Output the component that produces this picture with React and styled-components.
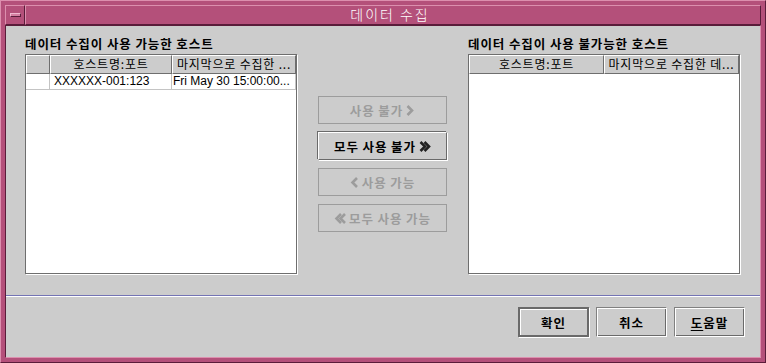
import React from 'react';
import styled, { createGlobalStyle } from 'styled-components';

const GlobalStyle = createGlobalStyle`
  html, body {
    margin: 0;
    padding: 0;
    background: #cccccc;
  }
  * {
    box-sizing: border-box;
  }
`;

const KO = `"Noto Sans CJK KR", "Noto Sans", sans-serif`;

const Frame = styled.div`
  width: 766px;
  height: 363px;
  background: #b4507a;
  border: 1px solid;
  border-color: #dc8fae #5a1c3a #5a1c3a #dc8fae;
  padding: 4px;
  display: flex;
  flex-direction: column;
`;

const TitleBar = styled.div`
  display: flex;
  height: 20px;
`;

const MenuButton = styled.div`
  width: 20px;
  height: 20px;
  border: 1px solid;
  border-color: #dc8fae #5a1c3a #5a1c3a #dc8fae;
  display: flex;
  align-items: center;
  justify-content: center;
`;

const MenuBar = styled.div`
  width: 11px;
  height: 4px;
  background: #d47fa2;
  border: 1px solid;
  border-color: #f0b8cf #5a1c3a #5a1c3a #f0b8cf;
`;

const Title = styled.div`
  flex: 1;
  height: 20px;
  border: 1px solid;
  border-color: #dc8fae #5a1c3a #5a1c3a #dc8fae;
  color: #ffffff;
  font-family: ${KO};
  font-size: 14px;
  font-weight: 300;
  letter-spacing: 2px;
  line-height: 17px;
  text-align: center;
  padding-right: 6px;
`;

const Body = styled.div`
  flex: 1;
  background: #cccccc;
  border: 1px solid;
  border-color: #5a1c3a #dc8fae #dc8fae #5a1c3a;
  display: flex;
  flex-direction: column;
`;

const Content = styled.div`
  display: grid;
  grid-template-columns: 272px 129px 272px;
  column-gap: 21px;
  padding: 10px 0 0 19px;
`;

const Column = styled.div`
  display: flex;
  flex-direction: column;
`;

const Label = styled.div`
  font-family: ${KO};
  font-size: 12.5px;
  font-weight: 700;
  letter-spacing: 0.9px;
  color: #000;
  height: 15px;
  line-height: 15px;
  margin-bottom: 3px;
  white-space: nowrap;
`;

const Table = styled.div`
  width: 272px;
  height: 220px;
  background: #ffffff;
  border: 1px solid #6e6e6e;
  box-shadow: 1px 1px 0 #ffffff;
  display: flex;
  flex-direction: column;
`;

const HeaderRow = styled.div`
  display: grid;
  grid-template-columns: ${p => p.$cols};
  height: 19px;
`;

const HeaderCell = styled.div`
  background: #cccccc;
  border: 1px solid;
  border-color: #ffffff #6e6e6e #6e6e6e #ffffff;
  font-family: ${KO};
  font-size: 12px;
  letter-spacing: 0.8px;
  line-height: 16px;
  color: #000;
  text-align: center;
  white-space: nowrap;
  overflow: hidden;
`;

const DataRow = styled.div`
  display: grid;
  grid-template-columns: ${p => p.$cols};
  height: 16px;
`;

const DataCell = styled.div`
  border-right: 1px solid #c4c4c4;
  border-bottom: 1px solid #c4c4c4;
  font-family: "Liberation Sans", Arial, sans-serif;
  font-size: 12px;
  line-height: 15px;
  color: #000;
  padding-left: ${p => p.$pad || 1}px;
  white-space: nowrap;
  overflow: hidden;
`;

const Middle = styled.div`
  display: flex;
  flex-direction: column;
  gap: 8px;
  padding-top: 60px;
`;

const MoveButton = styled.button`
  width: 129px;
  height: 28px;
  padding: 0;
  background: #cccccc;
  font-family: ${KO};
  font-size: 12.5px;
  font-weight: 700;
  letter-spacing: 0.9px;
  display: flex;
  align-items: center;
  justify-content: center;
  gap: 3px;
  color: ${p => (p.disabled ? '#9c9c9c' : '#000')};
  border: 1px solid;
  border-color: ${p => (p.disabled ? '#9c9c9c' : '#ffffff #6a6a6a #6a6a6a #ffffff')};
  box-shadow: ${p => (p.disabled ? 'none' : '1px 1px 0 #ffffff, -1px -1px 0 #6a6a6a')};
`;

const Separator = styled.div`
  margin-top: 21px;
  height: 2px;
  border-top: 1px solid #7474b4;
  border-bottom: 1px solid #ffffff;
`;

const ButtonRow = styled.div`
  display: flex;
  justify-content: flex-end;
  gap: 7px;
  padding: 10px 15px 0 0;
`;

const DialogButton = styled.button`
  width: 71px;
  height: 30px;
  padding: 0;
  background: #cccccc;
  font-family: ${KO};
  font-size: 12.5px;
  font-weight: 700;
  letter-spacing: 1px;
  color: #000;
  border: ${p => (p.$default ? '2px solid #6a6a6a' : '1px solid')};
  border-color: ${p => (p.$default ? '#6a6a6a' : '#808080 #ffffff #ffffff #808080')};
  box-shadow: ${p =>
    p.$default
      ? '1px 1px 0 #ffffff, inset 1px 1px 0 #ffffff'
      : 'inset 1px 1px 0 #ffffff, inset -1px -1px 0 #6a6a6a'};
`;

const Mnemonic = styled.span`
  text-decoration: underline;
  text-underline-offset: 2px;
`;

const Chevron = ({ dir = 'right', double = false, color }) => {
  const pts = dir === 'right' ? '1.5,1 6,5.5 1.5,10' : '7,1 2.5,5.5 7,10';
  return (
    <svg width={double ? 12 : 9} height="11" viewBox={`0 0 ${double ? 12 : 9} 11`}>
      <polyline points={pts} fill="none" stroke={color} strokeWidth="2.6" />
      {double && (
        <polyline
          points={pts}
          transform="translate(4 0)"
          fill="none"
          stroke={color}
          strokeWidth="2.6"
        />
      )}
    </svg>
  );
};

const leftCols = '24px 122px 1fr';
const rightCols = '135px 1fr';

export default function App() {
  return (
    <>
      <GlobalStyle />
      <Frame>
        <TitleBar>
          <MenuButton>
            <MenuBar />
          </MenuButton>
          <Title>데이터 수집</Title>
        </TitleBar>
        <Body>
          <Content>
            <Column>
              <Label>데이터 수집이 사용 가능한 호스트</Label>
              <Table>
                <HeaderRow $cols={leftCols}>
                  <HeaderCell />
                  <HeaderCell>호스트명:포트</HeaderCell>
                  <HeaderCell>마지막으로 수집한 ...</HeaderCell>
                </HeaderRow>
                <DataRow $cols={leftCols}>
                  <DataCell />
                  <DataCell $pad={4}>XXXXXX-001:123</DataCell>
                  <DataCell>Fri May 30 15:00:00...</DataCell>
                </DataRow>
              </Table>
            </Column>
            <Middle>
              <MoveButton disabled>
                사용 불가 <Chevron color="#9c9c9c" />
              </MoveButton>
              <MoveButton>
                모두 사용 불가 <Chevron double color="#222" />
              </MoveButton>
              <MoveButton disabled>
                <Chevron dir="left" color="#9c9c9c" /> 사용 가능
              </MoveButton>
              <MoveButton disabled>
                <Chevron dir="left" double color="#9c9c9c" />모두 사용 가능
              </MoveButton>
            </Middle>
            <Column>
              <Label>데이터 수집이 사용 불가능한 호스트</Label>
              <Table>
                <HeaderRow $cols={rightCols}>
                  <HeaderCell>호스트명:포트</HeaderCell>
                  <HeaderCell>마지막으로 수집한 데...</HeaderCell>
                </HeaderRow>
              </Table>
            </Column>
          </Content>
          <Separator />
          <ButtonRow>
            <DialogButton $default>확인</DialogButton>
            <DialogButton>취소</DialogButton>
            <DialogButton>
              <Mnemonic>도</Mnemonic>움말
            </DialogButton>
          </ButtonRow>
        </Body>
      </Frame>
    </>
  );
}
